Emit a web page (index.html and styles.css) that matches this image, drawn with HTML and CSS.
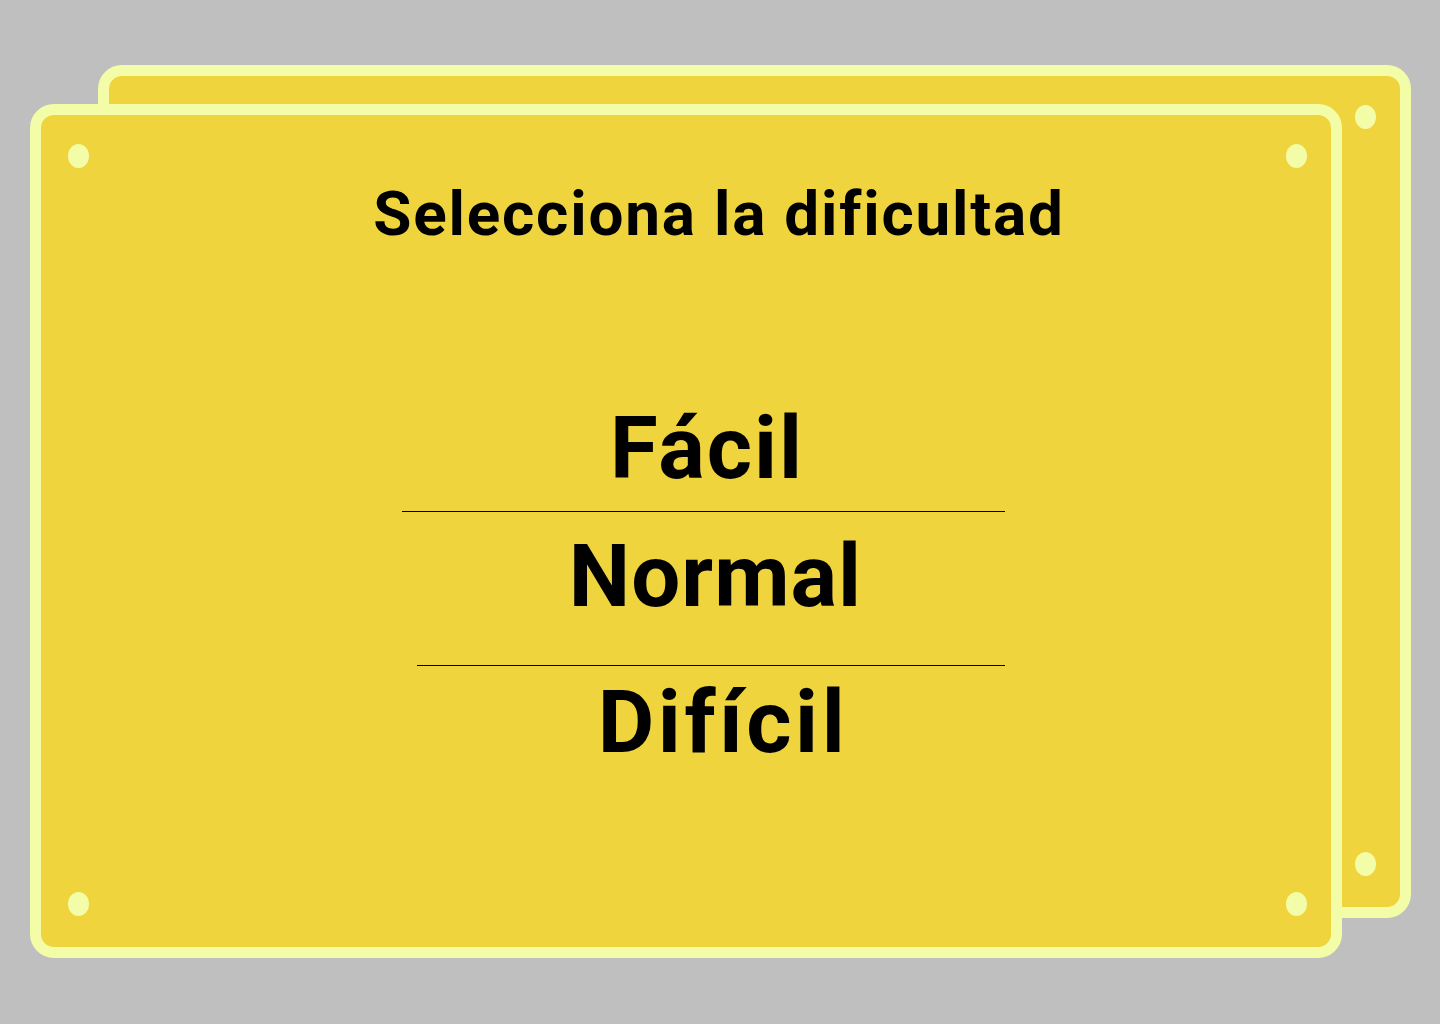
FILE: index.html
```html
<!DOCTYPE html>
<html lang="es">
<head>
<meta charset="utf-8">
<title>Selecciona la dificultad</title>
<link rel="stylesheet" href="styles.css">
</head>
<body>
<div class="stage">
  <div class="card card-back">
    <span class="dot dot-tl"></span>
    <span class="dot dot-tr"></span>
    <span class="dot dot-bl"></span>
    <span class="dot dot-br"></span>
  </div>
  <div class="card card-front">
    <span class="dot dot-tl"></span>
    <span class="dot dot-tr"></span>
    <span class="dot dot-bl"></span>
    <span class="dot dot-br"></span>
    <h1 class="title">Selecciona la dificultad</h1>
    <ul class="menu">
      <li class="item item-easy">Fácil</li>
      <li class="item item-normal">Normal</li>
      <li class="item item-hard">Difícil</li>
    </ul>
  </div>
</div>
</body>
</html>
```

FILE: styles.css
```css
html, body {
  margin: 0;
  padding: 0;
}
body {
  background: #bfbfbf;
  width: 1440px;
  height: 1024px;
  overflow: hidden;
  font-family: Roboto, "Liberation Sans", sans-serif;
  color: #000;
}
.stage {
  position: relative;
  padding: 104px 0 0 30px;
}
.card {
  box-sizing: border-box;
  background: #efd43e;
  border: 11px solid #f3fda8;
  border-radius: 24px;
}
.card-back {
  position: absolute;
  left: 98px;
  top: 65px;
  width: 1313px;
  height: 853px;
}
.card-front {
  position: relative;
  width: 1312px;
  height: 854px;
  display: flex;
  flex-direction: column;
  align-items: center;
}
.dot {
  position: absolute;
  width: 21px;
  height: 24px;
  border-radius: 50%;
  background: #f3fda8;
}
.dot-tl { left: 27px; top: 29px; }
.dot-tr { right: 24px; top: 29px; }
.dot-bl { left: 27px; bottom: 31px; }
.dot-br { right: 24px; bottom: 31px; }

.title {
  margin: 68px 0 0 66px;
  font-size: 62px;
  line-height: 62px;
  font-weight: 700;
  letter-spacing: 1.8px;
}
.menu {
  list-style: none;
  margin: 160px 0 0 0;
  padding: 0;
  width: 603px;
  display: flex;
  flex-direction: column;
  align-items: flex-end;
  position: relative;
  left: 17px;
}
.item {
  font-size: 87px;
  line-height: 87px;
  font-weight: 700;
  text-align: center;
  box-sizing: border-box;
  letter-spacing: 2px;
}
.item-easy {
  width: 603px;
  padding: 0 0 19px 8px;
  border-bottom: 1px solid #000;
}
.item-normal {
  width: 588px;
  padding: 21px 0 45px 10px;
  border-bottom: 1px solid #000;
  letter-spacing: 1px;
}
.item-hard {
  width: 563px;
  padding: 13px 0 0 0;
  letter-spacing: 3.5px;
}
```
